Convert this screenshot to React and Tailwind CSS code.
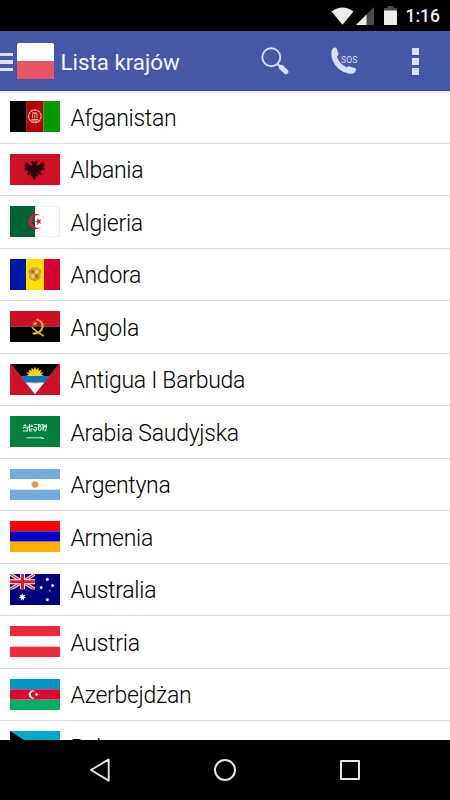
import React from 'react';

// Star with n points as a polygon points string
const star = (cx, cy, r, n = 5, inner = 0.4) =>
  Array.from({ length: n * 2 }, (_, i) => {
    const a = (Math.PI * i) / n - Math.PI / 2;
    const d = i % 2 ? r * inner : r;
    return `${(cx + d * Math.cos(a)).toFixed(2)},${(cy + d * Math.sin(a)).toFixed(2)}`;
  }).join(' ');

const Rows = ({ colors }) => colors.map((c, i) => (
  <rect key={i} y={(i * 31) / colors.length} width="50" height={31 / colors.length} fill={c} />
));

const Cols = ({ colors }) => colors.map((c, i) => (
  <rect key={i} x={(i * 50) / colors.length} width={50 / colors.length} height="31" fill={c} />
));

const flags = {
  af: (
    <>
      <Cols colors={['#000', '#b80000', '#009a00']} />
      <g fill="none" stroke="#f0b4a4">
        <circle cx="24.8" cy="15.3" r="6.3" strokeWidth="1.3" strokeDasharray="3 .5" />
        <path d="M21.500 18.500h6.600M22.500 17v-3.500l2.300-1.800 2.300 1.800V17M24.800 13.500v4M22 12h5.400M21 20h7.600" strokeWidth="1" />
      </g>
    </>
  ),
  al: (
    <>
      <rect width="50" height="31" fill="#cf1126" />
      <path fill="#2a0509" d="M24.8 9.2l-1.2-2.2-3 .2 1.3 1.2-1.3.7 1.8 1.2-.4 1.8-2-1.200-4.200-3.600.8 2.800-1.800-.4 1.200 2-1.600.1 1.700 1.600-1.400.7 2 .9-1.200 1 2.200.3-.8 1.400 2.600-.6-2.700 3.200 1.600-.2.1 1.600 2.200-2.400.8.3-1.200 3 1.800-.6.8 1.700.5 1.500 1.200 1 .5-1.300.8-1.700.8-1.200 1.800.6-1.200-3 .8-.3 2.200 2.400.1-1.600 1.600.2-2.700-3.200 2.600.6-.8-1.400 2.200-.3-1.200-1 2-.9-1.400-.7 1.700-1.600-1.600-.1 1.200-2-1.800.4.8-2.800-4.200 3.600-2 1.200-.4-1.800 1.800-1.200-1.300-.7 1.300-1.200-3-.2z" />
      <path d="M15.500 8.500v9M17 19.500l2 1.500M34 8.500v9M32.500 19.500l-2 1.500" stroke="#2a0509" strokeWidth="1.400" strokeDasharray="1 .8" fill="none" />
    </>
  ),
  dz: (
    <>
      <Cols colors={['#006334', '#fff']} />
      <path d="M25 .3h24.600v30.400H25" fill="none" stroke="#dcdcdc" strokeWidth=".7" />
      <path d="M31.500 10.200A7.700 7.700 0 1 0 31.500 20.800A6.200 6.200 0 1 1 31.500 10.200Z" fill="#d01c3a" />
      <polygon points={star(28.5, 15.5, 3.7)} fill="#d01c3a" transform="rotate(-18 28.5 15.5)" />
    </>
  ),
  ad: (
    <>
      <rect width="16" height="31" fill="#0018a8" />
      <rect x="16" width="18" height="31" fill="#fedf00" />
      <rect x="34" width="16" height="31" fill="#d50032" />
      <path d="M20 10q2-2.400 4.800-1.500 2.800-1 4.800 1.500 2.500 2 1 5 .5 4-2.500 5.500l-3.300 1.500-3.300-1.500q-3-1.500-2.500-5.500-1.500-3 1-5z" fill="#d3a630" />
      <path d="M21.300 11h3v3.500h-3zM25.300 15.500h3v3.500h-3z" fill="#c2643a" />
      <path d="M25.300 11h3v3.500h-3zM21.300 15.500h3v3.500h-3z" fill="#e8c795" />
      <path d="M19 18q1.500 3 5.800 3.400 4.300-.4 5.800-3.400M20 10.500l-1.300 3M29.600 10.500l1.300 3" fill="none" stroke="#a98b3a" strokeWidth=".8" />
    </>
  ),
  ao: (
    <>
      <Rows colors={['#cf0f26', '#000']} />
      <g fill="none" stroke="#f4c51c">
        <path d="M26.500 8.500Q33.500 10.500 32.300 16.500 30.500 22.500 22.500 22.500" strokeWidth="1.600" />
        <path d="M28 7.800q6.300 3 5.300 9-1.800 6.700-10.300 6.800" strokeWidth=".9" strokeDasharray="1 1" />
        <path d="M22.300 16.500q3 3.300 11.200 8.300" strokeWidth="1.500" strokeLinecap="round" />
      </g>
      <polygon points={star(25, 12.7, 2.8)} fill="#f4c51c" />
    </>
  ),
  ag: (
    <>
      <rect width="50" height="31" fill="#cf1126" />
      <path d="M1 0h48L25 30.500z" fill="#fff" />
      <path d="M1 0h48L39.500 12h-29z" fill="#000" />
      <polygon points={star(25, 12, 9.3, 16, 0.68)} fill="#fcd116" />
      <path d="M10.500 12h29l-5 6.600h-19z" fill="#0b72c6" />
      <path d="M0 0h1l14.500 18.600L25 30.500V31H0zM50 0h-1L34.500 18.600 25 30.500V31h25z" fill="#cf1126" />
    </>
  ),
  sa: (
    <>
      <rect width="50" height="31" fill="#00803c" />
      <g fill="none" stroke="#e3f3e8" strokeWidth="1.100">
        <path d="M13 15h4.500l.5-5M13.500 9.500l3 .2M13 12q2.500-2 3.500.8M19.500 8v7h3M19 10.500h3.500l-1-2M24 15q2.500.2 2.500-3l-2.200-1M24 8.500h3.500M28.500 8v6.500M28 11.500q3-2.500 3.300 1.300L29.500 15M33 8v6.800M31 9l1.300-.8M34.500 15q2-.3 2-6.500M34 9.500l-.6 4M15 8v2M22.500 12.500l-2 1M30.500 10l-1.500-2M25 13.300l-2 .2M35 8.500v3" />
        <path d="M16.500 21.800H33M30.500 21.200l3.500 1.500" strokeWidth=".9" />
      </g>
    </>
  ),
  ar: (
    <>
      <Rows colors={['#76a9dc', '#fff', '#76a9dc']} />
      <polygon points={star(25, 15.5, 4.4, 16, 0.7)} fill="#efc378" />
      <circle cx="25" cy="15.5" r="2.7" fill="#d99a3d" />
    </>
  ),
  am: <Rows colors={['#fb0000', '#0000c8', '#ffad00']} />,
  au: (
    <>
      <rect width="50" height="31" fill="#00007f" />
      <svg width="25" height="15.5" viewBox="0 0 25 15.5">
        <path d="M0 0l25 15.500M25 0L0 15.500" stroke="#f4e9ee" strokeWidth="3.200" />
        <path d="M0 0l25 15.500M25 0L0 15.500" stroke="#e8243c" strokeWidth="1.100" />
        <path d="M12.500 0v15.500M0 7.750h25" stroke="#fff" strokeWidth="5" />
        <path d="M12.500 0v15.500M0 7.750h25" stroke="#f0101e" strokeWidth="3" />
      </svg>
      <g fill="#fff">
        <polygon points={star(12.4, 23.2, 4, 7, 0.45)} />
        <polygon points={star(37.3, 5.5, 1.9, 7, 0.6)} />
        <polygon points={star(31.2, 13.6, 1.9, 7, 0.6)} />
        <polygon points={star(42.6, 11.6, 1.9, 7, 0.6)} />
        <polygon points={star(37.3, 25.7, 1.9, 7, 0.6)} />
        <polygon points={star(39.8, 16.8, 1.2)} />
      </g>
    </>
  ),
  at: (
    <>
      <Rows colors={['#ec2b3b', '#fff', '#ec2b3b']} />
      <path d="M.3 10.400v10.200M49.700 10.400v10.200" stroke="#dcdcdc" strokeWidth=".6" />
    </>
  ),
  az: (
    <>
      <Rows colors={['#0098c3', '#e00034', '#00ae65']} />
      <path d="M25.300 12.400A4 4 0 1 0 25.300 18.600A3.300 3.300 0 1 1 25.300 12.400Z" fill="#fff" />
      <polygon points={star(26.6, 15.5, 1.9, 8, 0.55)} fill="#fff" />
    </>
  ),
  bs: (
    <>
      <Rows colors={['#00a9ca', '#fae042', '#00a9ca']} />
      <path d="M0 0l24 15.500L0 31z" fill="#000" />
    </>
  ),
};

const countries = [
  { code: 'af', name: 'Afganistan' },
  { code: 'al', name: 'Albania' },
  { code: 'dz', name: 'Algieria' },
  { code: 'ad', name: 'Andora' },
  { code: 'ao', name: 'Angola' },
  { code: 'ag', name: 'Antigua I Barbuda' },
  { code: 'sa', name: 'Arabia Saudyjska' },
  { code: 'ar', name: 'Argentyna' },
  { code: 'am', name: 'Armenia' },
  { code: 'au', name: 'Australia' },
  { code: 'at', name: 'Austria' },
  { code: 'az', name: 'Azerbejdżan' },
  { code: 'bs', name: 'Bahamy' },
];

function StatusBar() {
  return (
    <div className="flex h-[31px] shrink-0 items-center justify-end bg-black pr-[10px] text-[#ececec]">
      <svg width="23" height="18" viewBox="0 0 23 18" className="mr-[2px]">
        <path d="M.5 4.600Q11.500-3.600 22.500 4.600L11.500 17.800z" fill="currentColor" />
      </svg>
      <svg width="18" height="18" viewBox="0 0 18 18" className="mr-[10px]">
        <path d="M0 18L18 0v18z" fill="#4a4a4a" />
        <path d="M0 18L10.500 7.500V18z" fill="currentColor" />
      </svg>
      <svg width="13" height="19" viewBox="0 0 13 19" className="mr-[9px]">
        <path d="M3.500 0h6v2H13v3H0V2h3.500z" fill="#4a4a4a" />
        <path d="M0 4.500h13V19H0z" fill="currentColor" />
      </svg>
      <span className="pt-[2px] text-[17.5px] leading-none font-medium">1:16</span>
    </div>
  );
}

function AppBar() {
  return (
    <header className="flex h-[60px] shrink-0 items-center border-b border-[#34478c] bg-[#4558a7]">
      <div className="flex flex-col gap-1 pt-[3px]">
        <span className="h-[3.5px] w-[13px] bg-[#dde3f8]" />
        <span className="h-[3.5px] w-[13px] bg-[#dde3f8]" />
        <span className="h-[3.5px] w-[13px] bg-[#dde3f8]" />
      </div>
      <div className="ml-1 h-9 w-[37px] overflow-hidden rounded-[2px] bg-white">
        <div className="mt-[18px] h-[18px] bg-[#ea5565]" />
      </div>
      <h1 className="ml-[6.5px] pt-[3px] text-[22.3px] leading-none text-[#f5f6ff]">Lista krajów</h1>
      <div className="ml-auto flex items-center pt-px pr-[31.5px] text-[#d8dff8]">
        <svg width="28" height="28" viewBox="0 0 28 28" className="mr-[42px]">
          <circle cx="10.3" cy="10.3" r="9" fill="none" stroke="currentColor" strokeWidth="1.9" />
          <path d="M16.300 16.800l3.200 3" stroke="currentColor" strokeWidth="2.2" />
          <path d="M20.300 20.300l4.600 4.500" stroke="currentColor" strokeWidth="5" strokeLinecap="round" />
        </svg>
        <svg width="28" height="28" viewBox="0 0 28 28" className="mr-[53px]">
          <path d="M1.500 1.800Q3.800-.2 5.600 1.200L7.500 6.500Q7.800 8 5.900 9.500 8 16.500 15.800 20.600 17.300 18.800 18.600 19.400L24.300 21.300Q25.600 22.200 24.500 24.600 22.500 27.600 17.500 26.600 5.500 23.500 1.500 13 -.8 5.500 1.500 1.800Z" fill="currentColor" />
          <text x="10" y="15.500" fontSize="8.6" textLength="16.3" fill="currentColor" fontWeight="400">SOS</text>
        </svg>
        <div className="flex flex-col gap-[3px]">
          <span className="h-[7px] w-[6.5px] bg-current" />
          <span className="h-[7px] w-[6.5px] bg-current" />
          <span className="h-[7px] w-[6.5px] bg-current" />
        </div>
      </div>
    </header>
  );
}

function CountryRow({ code, name }) {
  return (
    <li className="flex h-[52.5px] items-center border-b border-[#d9d9d9] pl-[10.4px]">
      <svg width="50" height="31" viewBox="0 0 50 31" className="shrink-0">
        {flags[code]}
      </svg>
      <span className="ml-[10px] pt-[3px] text-[23px] leading-none font-light tracking-[-0.27px] text-black">{name}</span>
    </li>
  );
}

function NavBar() {
  return (
    <nav className="flex h-[60px] shrink-0 items-center justify-between bg-black px-[88px] text-[#e6e6e6]">
      <svg width="24" height="24" viewBox="0 0 24 24" fill="none" stroke="currentColor" strokeWidth="1.9" strokeLinejoin="round">
        <path d="M3 12L20.700 1.400v21.200z" />
      </svg>
      <svg width="24" height="24" viewBox="0 0 24 24" fill="none" stroke="currentColor" strokeWidth="2">
        <circle cx="12" cy="12" r="10" />
      </svg>
      <svg width="24" height="24" viewBox="0 0 24 24" fill="none" stroke="currentColor" strokeWidth="2" strokeLinejoin="round">
        <rect x="3" y="3" width="18" height="18" />
      </svg>
    </nav>
  );
}

export default function App() {
  return (
    <div className="flex h-[800px] w-[450px] flex-col overflow-hidden bg-white font-[Roboto,sans-serif]">
      <StatusBar />
      <AppBar />
      <main className="min-h-0 flex-1 overflow-hidden bg-linear-to-b from-[#e4e8ee] to-white to-[6px]">
        <ul>
          {countries.map((c) => <CountryRow key={c.code} {...c} />)}
        </ul>
      </main>
      <NavBar />
    </div>
  );
}
